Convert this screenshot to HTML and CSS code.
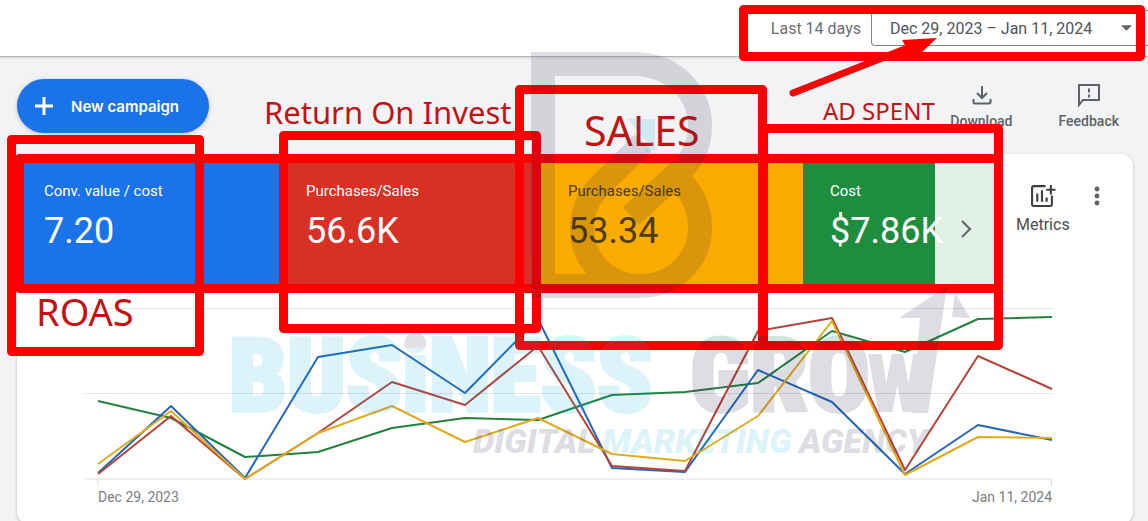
FILE: index.html
```html
<!DOCTYPE html>
<html lang="en">
<head>
<meta charset="utf-8">
<title>Campaign overview</title>
<link rel="stylesheet" href="styles.css">
</head>
<body>
<header class="topbar">
  <span class="range-name">Last 14 days</span>
  <button class="range-picker" type="button">Dec 29, 2023 – Jan 11, 2024
    <svg class="caret" viewBox="0 0 12 6" aria-hidden="true"><path d="M0 0h12L6 6z"/></svg>
  </button>
</header>

<main class="content">
  <div class="toolbar">
    <button class="new-campaign" type="button">
      <svg class="plus" viewBox="0 0 20 20" aria-hidden="true"><path d="M10 1v18M1 10h18"/></svg>
      New campaign
    </button>
    <div class="actions">
      <button class="action" type="button">
        <svg viewBox="0 0 24 24" aria-hidden="true"><path d="M13 3v12M8 10l5 5 5-5M4.500 16v3A1.500 1.500 0 0 0 6 20.500h14a1.500 1.500 0 0 0 1.500-1.500v-3"/></svg>
        Download
      </button>
      <button class="action" type="button">
        <svg viewBox="0 0 24 24" aria-hidden="true"><path d="M2 22V2h20v15H6z"/><path d="M12 5.500v4M12 11.500v3"/></svg>
        Feedback
      </button>
    </div>
  </div>

  <section class="card">
    <div class="card-head">
      <div class="tiles">
        <button class="tile blue" type="button"><span class="tile-name">Conv. value / cost</span><span class="tile-value">7.20</span></button>
        <button class="tile red" type="button"><span class="tile-name">Purchases/Sales</span><span class="tile-value">56.6K</span></button>
        <button class="tile yellow" type="button"><span class="tile-name">Purchases/Sales</span><span class="tile-value">53.34</span></button>
        <button class="tile green" type="button"><span class="tile-name">Cost</span><span class="tile-value">$7.86K</span></button>
        <button class="next" type="button" aria-label="Next metrics"><svg viewBox="0 0 12 18" aria-hidden="true"><path d="M2 1l8 8-8 8"/></svg></button>
      </div>
      <div class="tools">
        <button class="metrics" type="button">
          <svg viewBox="0 0 24 24" aria-hidden="true"><path d="M15 3H3.500A1.500 1.500 0 0 0 2 4.500v16A1.500 1.500 0 0 0 3.500 22h16a1.500 1.500 0 0 0 1.500-1.500V12M7 10v8M11.500 7v11M16 14v4M20 2v9M15.500 6.500h9"/></svg>
          Metrics
        </button>
        <button class="more" type="button" aria-label="More options"><svg viewBox="0 0 6 20" aria-hidden="true"><circle cx="3" cy="3" r="2.400"/><circle cx="3" cy="10" r="2.400"/><circle cx="3" cy="17" r="2.400"/></svg></button>
      </div>
    </div>
    <figure class="chart">
      <svg class="plot" viewBox="84 300 968 190" preserveAspectRatio="none" role="img" aria-label="Metrics by day">
        <path class="grid" d="M84 308.500H1052M84 393.500H1052"/>
        <path class="axis" d="M84 479H1052M98 479V486M1051.500 479V486"/>
        <polyline class="line g" points="98,401 171,418 245,457 318,452 392,428 465,418 538,420 612,395 685,392 758,383 832,331 905,352 978,319 1052,317"/>
        <polyline class="line b" points="98,473 171,406 245,478 318,357 392,345 465,393 538,319 612,468 685,472 758,370 832,402 905,474 978,425 1052,440"/>
        <polyline class="line r" points="98,474 171,416 245,479 318,433 392,382 465,405 538,346 612,466 685,471 758,331 832,318 905,470 978,356 1052,389"/>
        <polyline class="line y" points="98,464 171,411 245,479 318,433 392,406 465,442 538,418 612,454 685,461 758,416 832,321 905,475 978,437 1052,438"/>
      </svg>
      <figcaption class="dates"><span>Dec 29, 2023</span><span>Jan 11, 2024</span></figcaption>
    </figure>
  </section>
</main>

<svg class="notes" viewBox="0 0 1148 521" width="1148" height="521">
  <defs>
    <linearGradient id="dotted-i" gradientUnits="userSpaceOnUse" x1="0" y1="330" x2="0" y2="414">
      <stop offset="0.220" stop-color="#28244a"/><stop offset="0.220" stop-color="#00a5e0"/>
    </linearGradient>
  </defs>
  <g class="frames">
    <rect x="743.500" y="9.500" width="397" height="47"/>
    <rect x="11.500" y="139.500" width="188" height="212"/>
    <rect x="19.500" y="158.500" width="979" height="130"/>
    <rect x="283.500" y="135.500" width="253" height="193"/>
    <rect x="519.500" y="89.500" width="243" height="256"/>
    <rect x="763.500" y="128.500" width="235" height="217"/>
  </g>
  <path class="arrow" d="M793 93L905 49"/>
  <path class="arrow-head" d="M937 38L902 40L906 47L890 54L921 53Z"/>
  <g class="captions">
    <text class="cap-return" x="264" y="124">Return On Invest</text>
    <text class="cap-big" x="584" y="146">SALES</text>
    <text class="cap-roas" x="36" y="326">ROAS</text>
    <text class="cap-spent" x="823" y="120">AD SPENT</text>
  </g>
  <g class="mark-dark">
    <path class="monogram" d="M543 286V64H633C674 64 700 93 700 126C700 142 694 156 684 167L631 216M531 286H640C674 286 700 260 700 228C700 208 692 193 681 182M640 286C606 286 582 260 582 228C582 208 590 196 600 186L643 143"/>
    <path d="M947 286L899 318H920L912 413H928ZM955 293L970 318L952 317Z"/>
    <text class="mark-name" x="690" y="411">GRO</text>
    <text class="mark-w" x="867" y="412">W</text>
    <text class="mark-tag" x="473" y="453">DIGITAL</text>
    <text class="mark-tag" x="799" y="453">AGENCY</text>
  </g>
  <g class="mark-blue">
    <path d="M628 119H655V150L645 152L648 142L640 134Z"/>
    <text class="mark-name" x="229" y="411">BUS<tspan class="mark-i">i</tspan>NESS</text>
    <text class="mark-tag" x="602" y="453">MARKETING</text>
  </g>
</svg>
</body>
</html>
```

FILE: styles.css
```css
* { box-sizing: border-box; }
body {
  margin: 0;
  height: 100vh;
  overflow: hidden;
  position: relative;
  background: #f1f3f4;
  color: #5f6368;
  font-family: Roboto, sans-serif;
}
button {
  border: 0;
  padding: 0;
  background: none;
  color: inherit;
  font: inherit;
  cursor: pointer;
}
svg { display: block; }

.topbar {
  display: flex;
  justify-content: flex-end;
  align-items: center;
  gap: 10px;
  height: 57px;
  background: #fff;
  border-bottom: 1px solid #b4b6b8;
  box-shadow: 0 1px 2px #d0d2d4;
  font-size: 16px;
}
.range-name { color: #6b6f73; }
.range-picker {
  display: flex;
  align-items: center;
  justify-content: space-between;
  width: 277px;
  height: 36px;
  padding: 0 16px 0 18px;
  border: 1px solid #80868b;
  border-right: 0;
  border-radius: 4px 0 0 4px;
  color: #50545a;
}
.caret { width: 11px; height: 6px; fill: #5f6368; }

.content { padding: 22px 15px 0 17px; }
.toolbar {
  display: flex;
  justify-content: space-between;
  height: 75px;
}
.new-campaign {
  display: flex;
  align-items: center;
  gap: 17px;
  width: 192px;
  height: 54px;
  padding-left: 17px;
  border-radius: 27px;
  background: #1a73e8;
  color: #fff;
  font: 600 15px Inter, sans-serif;
  box-shadow: 0 1px 4px #b8bcc2;
}
.plus { width: 20px; height: 20px; fill: none; stroke: #fff; stroke-width: 3; }
.actions { display: flex; gap: 46px; padding: 4px 14px 0 0; height: 56px; }
.action {
  display: flex;
  flex-direction: column;
  align-items: center;
  gap: 6px;
  font-size: 14px;
  font-weight: 500;
  line-height: 16px;
}
.action svg { width: 24px; height: 24px; fill: none; stroke: #5f6368; stroke-width: 2; }

.card {
  height: 370px;
  border-radius: 12px;
  overflow: hidden;
  background: #fff;
  box-shadow: 0 1px 3px #b4b8bc;
}
.card-head { display: flex; height: 134px; }
.tiles { position: relative; display: flex; flex: 1; overflow: hidden; }
.tile {
  display: flex;
  flex: none;
  flex-direction: column;
  gap: 13px;
  width: 262px;
  padding: 28px 27px 0;
  text-align: left;
  color: #fff;
}
.blue { background: #1a73e8; }
.red { background: #d93025; }
.yellow { background: #f9ab00; color: #4f3c08; }
.green { background: #1e8e3e; }
.tile-name { font-size: 15px; line-height: 18px; }
.tile-value { font-size: 36px; line-height: 36px; }
.next {
  position: absolute;
  right: 0;
  top: 0;
  bottom: 0;
  width: 64px;
  padding: 16px 0 0 25px;
  background: rgba(255, 255, 255, 0.870);
}
.next svg { width: 12px; height: 18px; fill: none; stroke: #5f6368; stroke-width: 2; }
.tools { display: flex; align-items: flex-start; gap: 24px; width: 134px; padding: 29px 0 0 17px; }
.metrics {
  display: flex;
  flex-direction: column;
  align-items: center;
  gap: 8px;
  font-size: 16px;
  line-height: 18px;
  color: #4a4d51;
}
.metrics svg { width: 25px; height: 25px; fill: none; stroke: #3c4043; stroke-width: 2; overflow: visible; }
.more svg { width: 6px; height: 20px; margin-top: 3px; fill: #5f6368; }

.chart { margin: 0; padding: 12px 81px 0 67px; }
.plot { width: 100%; height: 190px; overflow: visible; }
.plot * { vector-effect: non-scaling-stroke; }
.grid { stroke: #e3e3e3; stroke-width: 1; }
.axis { fill: none; stroke: #dedede; stroke-width: 1; }
.line { fill: none; stroke-width: 2; stroke-linejoin: round; }
.line.g { stroke: #23823f; }
.line.b { stroke: #2268bd; }
.line.r { stroke: #b84238; }
.line.y { stroke: #e2aa1c; }
.dates {
  display: flex;
  justify-content: space-between;
  padding-left: 14px;
  font-size: 14px;
  line-height: 14px;
  color: #7b7e82;
}

.notes { position: absolute; left: 0; top: 0; pointer-events: none; }
.frames { fill: none; stroke: #fb0000; stroke-width: 9; stroke-linejoin: round; }
.arrow { stroke: #f00808; stroke-width: 7; stroke-linecap: round; }
.arrow-head { fill: #fb0000; }
.captions { fill: #c41212; font-family: "Noto Sans", sans-serif; }
.cap-return { font-size: 31px; }
.cap-big { font-size: 41px; }
.cap-roas { font-size: 38px; }
.cap-spent { font-size: 24px; }
.mark-dark { fill: #28244a; stroke: #28244a; stroke-width: 0; opacity: 0.150; }
.mark-blue { fill: #00a5e0; stroke: #00a5e0; stroke-width: 0; opacity: 0.130; }
.monogram { fill: none; stroke-width: 24; stroke-linejoin: miter; }
.mark-name {
  font-family: "Roboto Condensed", Roboto, sans-serif;
  font-size: 102px;
  font-weight: 900;
  stroke-width: 4;
}
.mark-i { fill: url(#dotted-i); stroke: url(#dotted-i); }
.mark-w { font: 900 82px "Roboto Condensed", Roboto, sans-serif; }
.mark-tag { font: italic 900 34px Roboto, sans-serif; }
```
